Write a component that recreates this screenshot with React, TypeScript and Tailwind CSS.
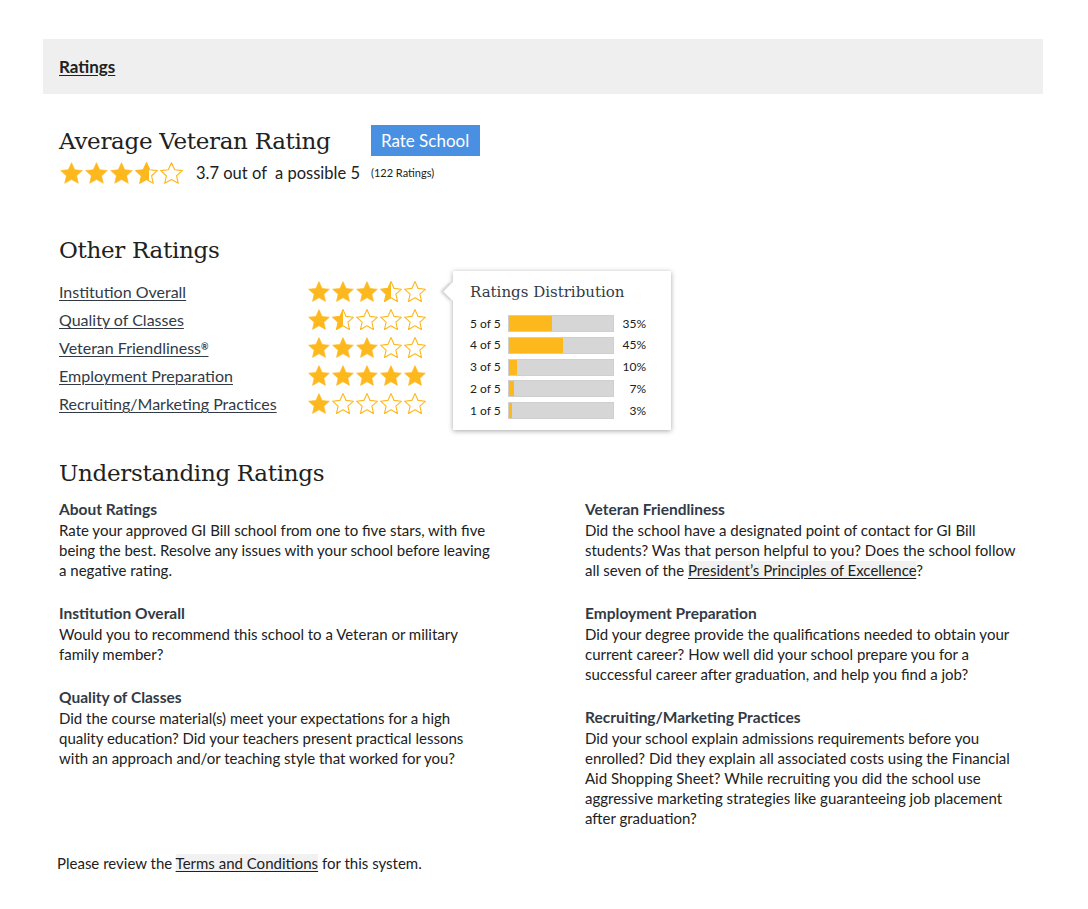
import React from "react";

const GOLD = "#fdb81e";
const STAR_POINTS =
  "12,1.6 15.1,8.4 22.4,9.2 16.9,14.2 18.5,21.4 12,17.7 5.5,21.4 7.1,14.2 1.6,9.2 8.9,8.4";

const Star = ({ fill, size, id }: { fill: number; size: number; id: string }) => (
  <svg width={size} height={size} viewBox="0 0 24 24" className="shrink-0">
    <defs>
      <linearGradient id={id} x1="0" x2="1" y1="0" y2="0">
        <stop offset={`${fill * 100}%`} stopColor={GOLD} />
        <stop offset={`${fill * 100}%`} stopColor="#ffffff" stopOpacity="0" />
      </linearGradient>
    </defs>
    <polygon
      points={STAR_POINTS}
      fill={`url(#${id})`}
      stroke={GOLD}
      strokeWidth={fill === 1 ? 0.6 : 1.1}
      strokeLinejoin="round"
    />
  </svg>
);

const Stars = ({ value, size, name }: { value: number; size: number; name: string }) => (
  <div className="flex items-center">
    {[0, 1, 2, 3, 4].map((i) => (
      <Star key={i} id={`${name}-${i}`} size={size} fill={Math.max(0, Math.min(1, value - i))} />
    ))}
  </div>
);

const otherRatings = [
  { label: "Institution Overall", value: 3.5 },
  { label: "Quality of Classes", value: 1.5 },
  { label: "Veteran Friendliness", value: 3, reg: true },
  { label: "Employment Preparation", value: 5 },
  { label: "Recruiting/Marketing Practices", value: 1 },
];

const distribution = [
  { label: "5 of 5", pct: 35, fill: 41 },
  { label: "4 of 5", pct: 45, fill: 52 },
  { label: "3 of 5", pct: 10, fill: 8 },
  { label: "2 of 5", pct: 7, fill: 5 },
  { label: "1 of 5", pct: 3, fill: 3 },
];

const Section = ({ title, children }: { title: string; children: React.ReactNode }) => (
  <div className="mb-[23px] last:mb-0">
    <h4 className="text-[15.5px] font-bold leading-[21px] text-[#323a45]">{title}</h4>
    <p className="text-[15px] leading-[20px] text-[#212121]">{children}</p>
  </div>
);

const InlineLink = ({ children }: { children: React.ReactNode }) => (
  <a className="underline decoration-1 underline-offset-2 bg-[#f1f1f1] text-[#212121]">{children}</a>
);

export default function App() {
  const serif = { fontFamily: "'DejaVu Serif', serif" };
  return (
    <div
      className="min-h-[909px] bg-white pt-[39px] pl-[43px] text-[#212121]"
      style={{ fontFamily: "Lato, 'Liberation Sans', sans-serif" }}
    >
      <div className="w-[1000px]">
        <div className="h-[55px] bg-[#efefef] flex items-center pl-[16px]">
          <a className="text-[17px] font-bold underline underline-offset-2 text-[#212121]">Ratings</a>
        </div>

        <div className="pl-[16px]">
          {/* Average rating */}
          <div className="mt-[31px] flex items-center">
            <h2 className="text-[23px] leading-[30px] text-[#212121] tracking-[-0.3px]" style={serif}>
              Average Veteran Rating
            </h2>
            <button className="ml-[40px] h-[31px] w-[109px] bg-[#4a90e2] text-white text-[17px] leading-none">
              Rate School
            </button>
          </div>
          <div className="mt-[5px] flex items-center">
            <Stars value={3.6} size={25} name="avg" />
            <span className="ml-[12px] text-[16.5px]">3.7 out of&nbsp; a possible 5</span>
            <span className="ml-[11px] text-[11px]">(122 Ratings)</span>
          </div>

          {/* Other ratings */}
          <h2 className="mt-[49px] text-[23px] leading-[30px] tracking-[-0.3px]" style={serif}>
            Other Ratings
          </h2>
          <div className="relative mt-[16px]">
            <div className="flex flex-col gap-[6px]">
              {otherRatings.map((r) => (
                <div key={r.label} className="flex items-center h-[22px]">
                  <a className="w-[248px] text-[16px] underline decoration-1 underline-offset-2 text-[#323a45]">
                    {r.label}
                    {r.reg && <sup className="text-[9px] font-bold">®</sup>}
                  </a>
                  <Stars value={r.value} size={24} name={r.label.replace(/\W/g, "")} />
                </div>
              ))}
            </div>

            <div className="absolute left-[394px] top-[-10px] w-[218px] bg-white shadow-[0_1px_5px_rgba(0,0,0,0.35)] pl-[17px] pr-[25px] pt-[11px] pb-[11px]">
              <div className="absolute left-[-7px] top-[14px] w-[13px] h-[13px] bg-white rotate-45 shadow-[-2px_2px_3px_rgba(0,0,0,0.2)]" />
              <div className="relative text-[15px] leading-[20px] text-[#323a45]" style={serif}>
                Ratings Distribution
              </div>
              <div className="relative mt-[13px] flex flex-col gap-[4.75px]">
                {distribution.map((d) => (
                  <div key={d.label} className="flex items-center h-[17px] text-[12px]">
                    <span className="w-[38px] text-[#212121]">{d.label}</span>
                    <div className="relative h-[17px] w-[106px] bg-[#d6d6d6] border border-[#cfcfcf]">
                      <div className="h-full bg-[#fdb81e]" style={{ width: `${d.fill}%` }} />
                    </div>
                    <span className="flex-1 text-right">{d.pct}%</span>
                  </div>
                ))}
              </div>
            </div>
          </div>

          {/* Understanding */}
          <h2 className="mt-[43px] text-[23px] leading-[30px] tracking-[-0.3px]" style={serif}>
            Understanding Ratings
          </h2>
          <div className="mt-[11px] grid grid-cols-[526px_1fr]">
            <div className="max-w-[434px]">
              <Section title="About Ratings">
                Rate your approved GI Bill school from one to five stars, with five being the best. Resolve any
                issues with your school before leaving a negative rating.
              </Section>
              <Section title="Institution Overall">
                Would you to recommend this school to a Veteran or military family member?
              </Section>
              <Section title="Quality of Classes">
                Did the course material(s) meet your expectations for a high quality education? Did your teachers
                present practical lessons with an approach and/or teaching style that worked for you?
              </Section>
            </div>
            <div className="max-w-[446px]">
              <Section title="Veteran Friendliness">
                Did the school have a designated point of contact for GI Bill students? Was that person helpful to
                you? Does the school follow all seven of the <InlineLink>President’s Principles of Excellence</InlineLink>?
              </Section>
              <Section title="Employment Preparation">
                Did your degree provide the qualifications needed to obtain your current career? How well did your
                school prepare you for a successful career after graduation, and help you find a job?
              </Section>
              <Section title="Recruiting/Marketing Practices">
                Did your school explain admissions requirements before you enrolled? Did they explain all associated
                costs using the Financial Aid Shopping Sheet? While recruiting you did the school use aggressive
                marketing strategies like guaranteeing job placement after graduation?
              </Section>
            </div>
          </div>
        </div>

        <p className="mt-[24px] pl-[14px] text-[15px]">
          Please review the <InlineLink>Terms and Conditions</InlineLink> for this system.
        </p>
      </div>
    </div>
  );
}
